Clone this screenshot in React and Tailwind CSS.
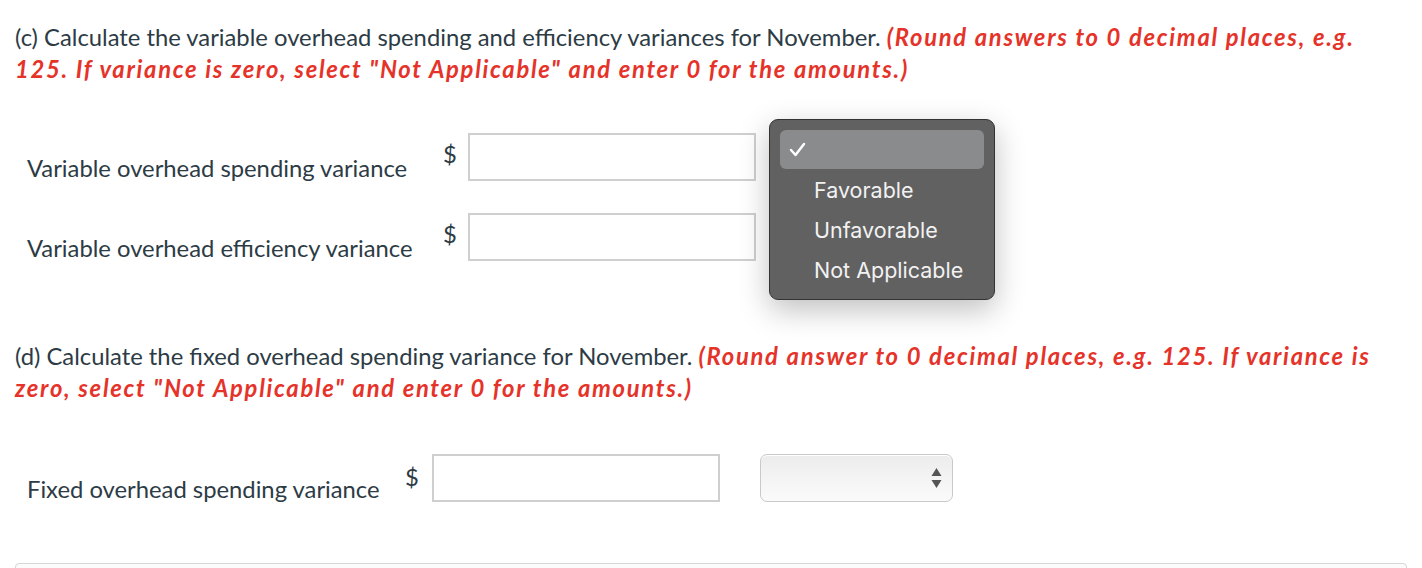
export default function App() {
  const lato = { fontFamily: "Lato, 'Open Sans', sans-serif" };
  return (
    <div className="relative w-[1422px] h-[568px] overflow-hidden bg-white text-[#2d3b45]" style={lato}>
      <div className="px-[15px] pt-[21px]">
        <p className="text-[23.8px] leading-[32px] w-[1390px]">
          (c) Calculate the variable overhead spending and efficiency variances for November.{" "}
          <span className="text-[#e5332a] font-bold italic tracking-[1.7px]">
            (Round answers to 0 decimal places, e.g. 125. If variance is zero, select "Not Applicable" and enter 0 for the amounts.)
          </span>
        </p>

        <div className="mt-[48px] flex flex-col gap-[32px]">
          <Row label="Variable overhead spending variance" labelW="w-[428px]" dollarW="w-[25px]" />
          <Row label="Variable overhead efficiency variance" labelW="w-[428px]" dollarW="w-[25px]" />
        </div>

        <p className="mt-[79px] text-[23.8px] leading-[32px] w-[1390px]">
          (d) Calculate the fixed overhead spending variance for November.{" "}
          <span className="text-[#e5332a] font-bold italic tracking-[1.7px]">
            (Round answer to 0 decimal places, e.g. 125. If variance is zero, select "Not Applicable" and enter 0 for the amounts.)
          </span>
        </p>

        <div className="mt-[50px] flex items-start">
          <Row label="Fixed overhead spending variance" labelW="w-[390px]" dollarW="w-[27px]" dollarMt="mt-[10px]" />
          <div className="ml-[40px] w-[193px] h-[48px] rounded-[7px] border border-[#c9c9c9] bg-gradient-to-b from-[#ececec] to-[#fbfbfb] shadow-[inset_0_1px_0_#fff] flex items-center justify-end pr-[10px]">
            <svg width="11" height="22" viewBox="0 0 11 22">
              <path d="M5.5 1 L10.5 9 L0.5 9 Z" fill="#555" />
              <path d="M5.5 21 L10.5 13 L0.5 13 Z" fill="#555" />
            </svg>
          </div>
        </div>

        <div className="mt-[61px] h-[20px] border border-[#d6d6d6] rounded-t-[4px] bg-[#fbfbfb]" />
      </div>

      <div
        className="absolute left-[769px] top-[119px] w-[226px] h-[181px] rounded-[9px] bg-[#616161] border border-[#333] p-[10px] shadow-[0_10px_30px_rgba(0,0,0,0.25)] text-[#f2f2f2]"
        style={{ fontFamily: "Inter, 'Liberation Sans', sans-serif" }}
      >
        <div className="h-[39px] rounded-[6px] bg-[#8a8b8c] flex items-center pl-[9px]">
          <svg width="17" height="15" viewBox="0 0 17 15">
            <path d="M2 8 L6.5 13 L15 2" fill="none" stroke="#fff" strokeWidth="2.5" strokeLinecap="round" strokeLinejoin="round" />
          </svg>
        </div>
        {["Favorable", "Unfavorable", "Not Applicable"].map((t) => (
          <div key={t} className="h-[40px] flex items-center pl-[34px] pt-[2px] text-[21.5px] leading-[26px]">
            {t}
          </div>
        ))}
      </div>
    </div>
  );
}

function Row({ label, labelW, dollarW, dollarMt = "mt-[8px]" }) {
  return (
    <div className="flex items-start h-[48px]">
      <div className={`${labelW} pl-[12px] mt-[22px] text-[23.8px] leading-[26px] whitespace-nowrap`}>{label}</div>
      <div className={`${dollarW} ${dollarMt} text-[23.8px] leading-[26px]`}>$</div>
      <div className="w-[288px] h-[48px] border-2 border-[#cfcfcf] bg-white" />
    </div>
  );
}
